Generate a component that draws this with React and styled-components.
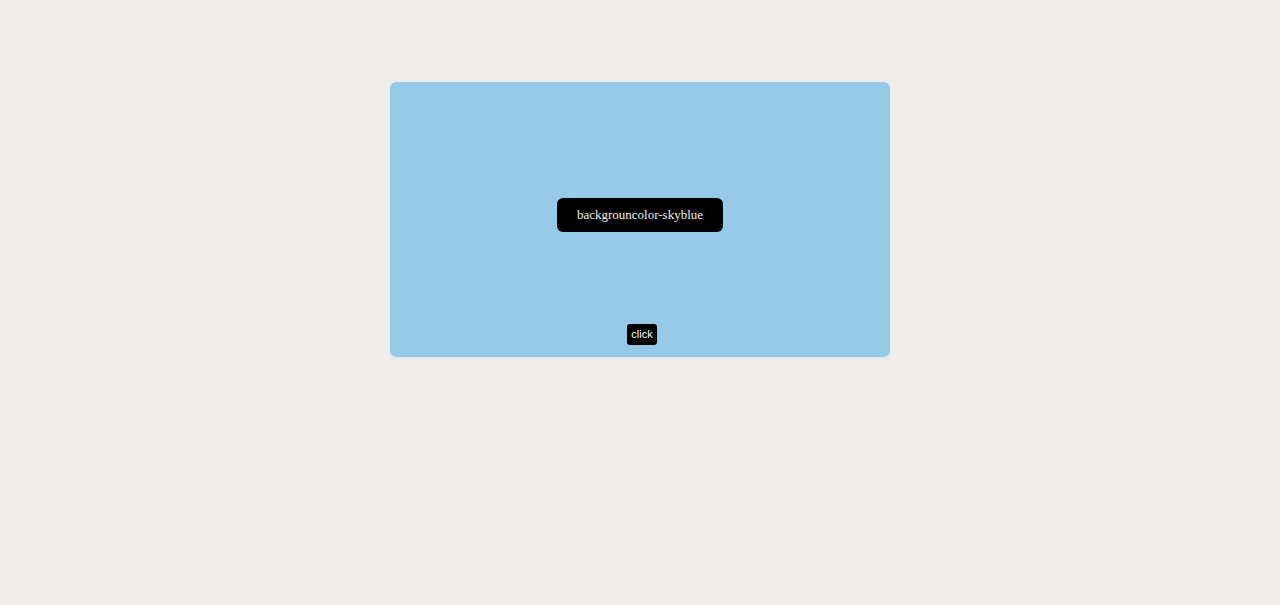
import React, { useState } from "react";
import styled, { createGlobalStyle } from "styled-components";

const GlobalStyle = createGlobalStyle`
  html, body {
    margin: 0;
    padding: 0;
    background: #eeedeb;
  }
`;

const Page = styled.div`
  min-height: 605px;
  display: flex;
  justify-content: center;
  align-items: flex-start;
  padding-top: 82px;
  box-sizing: border-box;
`;

const Card = styled.div`
  width: 500px;
  height: 275px;
  box-sizing: border-box;
  padding: 24px 0 12px;
  border-radius: 6px;
  background: ${(p) => p.$bg};
  display: flex;
  flex-direction: column;
  align-items: center;
`;

const Middle = styled.div`
  flex: 1;
  display: flex;
  align-items: center;
  justify-content: center;
`;

const Label = styled.div`
  height: 34px;
  padding: 0 20px;
  box-sizing: border-box;
  display: flex;
  align-items: center;
  border-radius: 6px;
  background: #000;
  color: #f2f2ea;
  font-family: "Liberation Serif", "Times New Roman", serif;
  font-size: 13px;
`;

const ClickButton = styled.button`
  height: 21px;
  margin-left: 4px;
  padding: 0 4px 1px;
  border: none;
  border-radius: 3px;
  background: #000;
  color: #fff;
  font-family: "Liberation Sans", Arial, sans-serif;
  font-size: 11px;
  cursor: pointer;
`;

const colors = [
  ["skyblue", "#97cae8"],
  ["pink", "#f4c2cc"],
  ["lightgreen", "#a8e0a8"],
];

export default function App() {
  const [index, setIndex] = useState(0);
  const [name, value] = colors[index];

  return (
    <>
      <GlobalStyle />
      <Page>
        <Card $bg={value}>
          <Middle>
            <Label>backgrouncolor-{name}</Label>
          </Middle>
          <ClickButton onClick={() => setIndex((index + 1) % colors.length)}>
            click
          </ClickButton>
        </Card>
      </Page>
    </>
  );
}
